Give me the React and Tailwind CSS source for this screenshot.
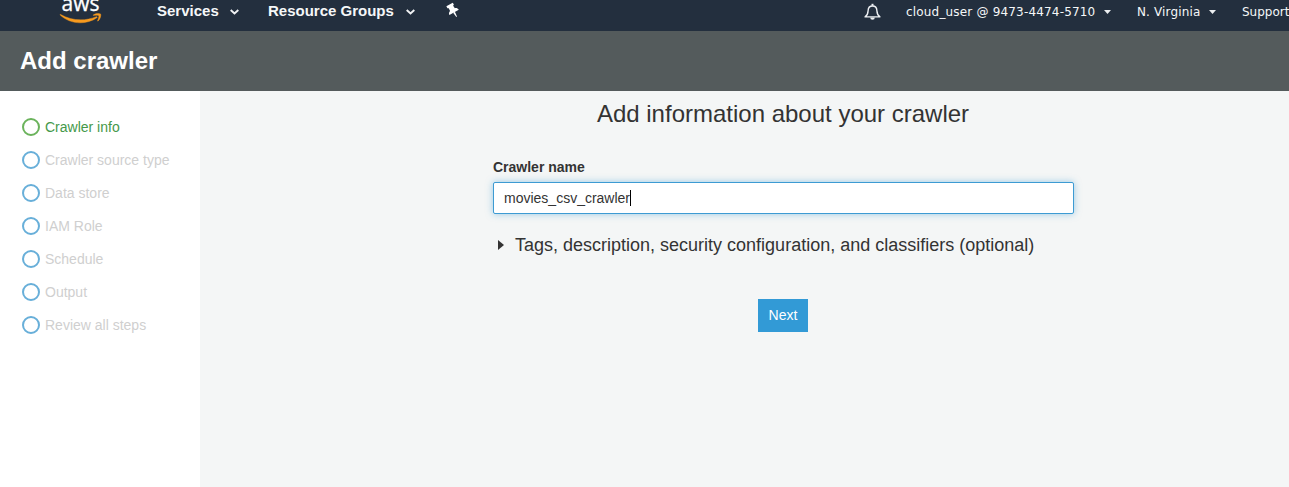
const steps = [
  'Crawler info',
  'Crawler source type',
  'Data store',
  'IAM Role',
  'Schedule',
  'Output',
  'Review all steps',
];

function AwsLogo() {
  return (
    <svg className="block h-[31px] w-[44px]" viewBox="0 0 44 31" aria-label="AWS">
      <text
        x="2.5"
        y="11"
        textLength="38"
        lengthAdjust="spacingAndGlyphs"
        fill="#fff"
        stroke="#fff"
        strokeWidth="0.3"
        fontSize="21"
        fontFamily="'Open Sans', sans-serif"
      >
        aws
      </text>
      <g transform="translate(1 -9.8) scale(1.7)" fill="#f79a1e" stroke="#f79a1e" strokeWidth=".25">
        <path d="M21.698 16.207c-2.626 1.94-6.442 2.969-9.722 2.969-4.598 0-8.74-1.7-11.87-4.526-.247-.223-.024-.527.272-.351 3.384 1.963 7.559 3.153 11.877 3.153 2.914 0 6.114-.607 9.06-1.852.439-.2.814.287.383.607z" />
        <path d="M22.792 14.961c-.336-.43-2.22-.207-3.074-.103-.255.032-.295-.192-.063-.36 1.5-1.053 3.967-.75 4.254-.399.287.36-.08 2.826-1.485 4.007-.215.184-.423.088-.327-.151.32-.79 1.03-2.57.695-2.994z" />
      </g>
    </svg>
  );
}

function Chevron() {
  return (
    <svg className="mt-[2px] h-[6px] w-[9px] shrink-0" viewBox="0 0 9 6">
      <path d="M.7 1l3.8 3.5L8.3 1" fill="none" stroke="#f0f2f4" strokeWidth="1.9" />
    </svg>
  );
}

function Caret() {
  return (
    <svg className="mt-[1px] h-[4px] w-[7px] shrink-0" viewBox="0 0 7 4">
      <path d="M0 0h7L3.5 4z" fill="#eceff1" />
    </svg>
  );
}

function Pin() {
  return (
    <svg className="h-[14px] w-[14px] overflow-visible" viewBox="0 0 14 14">
      <g transform="rotate(-30 7 6.5)" fill="#fff">
        <path d="M3.3-.4h7.4v2.2l-1.2.6.3 3c1.5.5 2.5 1.6 2.6 3.3H1.6c.1-1.7 1.1-2.8 2.6-3.3l.3-3-1.2-.6z" />
        <path d="M6 8.5h2l-.6 5.3h-.8z" />
      </g>
    </svg>
  );
}

function Bell() {
  return (
    <svg className="h-[18px] w-[17px]" viewBox="0 0 17 18" fill="none" stroke="#eef1f4">
      <path
        d="M1.1 13.9c2.4-1.8 2.9-3.5 3-6.2.1-3 1.8-4.7 4.4-4.7s4.3 1.7 4.4 4.7c.1 2.7.6 4.4 3 6.2z"
        strokeWidth="1.4"
        strokeLinejoin="round"
      />
      <path d="M8.5.8v2" strokeWidth="2" />
      <path d="M6.2 14.5a2.3 2.3 0 0 0 4.6 0z" fill="#eef1f4" stroke="none" />
    </svg>
  );
}

function TopBar() {
  return (
    <nav className="flex h-[31px] shrink-0 overflow-hidden bg-[#232f3e] whitespace-nowrap text-[#f5f7f8]">
      <div className="w-[98px] shrink-0 pl-[59px]">
        <AwsLogo />
      </div>
      <div className="ml-[59px] flex h-[22px] w-[111px] shrink-0 items-center gap-[11px] text-[15px] font-bold">
        <span>Services</span>
        <Chevron />
      </div>
      <div className="flex h-[22px] w-[178px] shrink-0 items-center gap-[12px] text-[15px] font-bold">
        <span>Resource Groups</span>
        <Chevron />
      </div>
      <div className="w-[418px] shrink-0 pt-[4px]">
        <Pin />
      </div>
      <div className="w-[42px] shrink-0 pt-[3px]">
        <Bell />
      </div>
      <div className="flex h-[23px] w-[231px] shrink-0 items-center font-['DejaVu_Sans',sans-serif] text-[12px]">
        <span className="w-[198px] tracking-[0.18px]">cloud_user @ 9473-4474-5710</span>
        <Caret />
      </div>
      <div className="flex h-[23px] w-[105px] shrink-0 items-center font-['DejaVu_Sans',sans-serif] text-[12px]">
        <span className="w-[72px] tracking-[0.14px]">N. Virginia</span>
        <Caret />
      </div>
      <div className="flex h-[23px] shrink-0 items-center font-['DejaVu_Sans',sans-serif] text-[12px]">
        Support
      </div>
    </nav>
  );
}

function Sidebar() {
  return (
    <aside className="w-[200px] shrink-0 bg-white pt-5 pl-[22px]">
      <ol>
        {steps.map((step, i) => (
          <li key={step} className="flex h-[33px] items-center gap-[5px] text-[14px]">
            <span
              className={
                i === 0
                  ? 'mb-px size-[18px] rounded-full border-2 border-[#6bb35c]'
                  : 'mb-px size-[18px] rounded-full border-2 border-[#68afd9]'
              }
            />
            <span className={i === 0 ? 'text-[#45994a]' : 'text-[#cfcfcf]'}>{step}</span>
          </li>
        ))}
      </ol>
    </aside>
  );
}

export default function App() {
  return (
    <div className="flex h-screen w-full flex-col overflow-hidden font-['Liberation_Sans',sans-serif] text-[#333]">
      <TopBar />
      <header className="flex h-[60px] shrink-0 items-center bg-[#545b5c] pl-5">
        <h1 className="text-[24px] leading-[30px] font-bold text-white">Add crawler</h1>
      </header>
      <div className="flex min-h-0 flex-1">
        <Sidebar />
        <main className="flex flex-1 flex-col items-center bg-[#f4f6f6] pl-[78px]">
          <div className="flex w-[581px] flex-col">
            <h2 className="mt-2 pr-px text-center text-[24px] leading-[30px]">Add information about your crawler</h2>
            <label className="mt-[28px] text-[14px] leading-[20px] font-bold">Crawler name</label>
            <div className="mt-[5px] flex h-[32px] items-center rounded-[2px] border border-[#3d9bd3] bg-white pl-[10px] text-[14px] shadow-[0_0_7px_rgba(61,155,211,0.5)]">
              <span>movies_csv_crawler</span>
              <span className="h-[16px] w-px bg-black" />
            </div>
            <div className="mt-[19px] flex h-[24px] items-center text-[18px]">
              <svg className="ml-[5px] h-[10px] w-[6px]" viewBox="0 0 6 10">
                <path d="M0 0l6 5-6 5z" fill="#333" />
              </svg>
              <span className="ml-[11px] whitespace-nowrap">
                Tags, description, security configuration, and classifiers (optional)
              </span>
            </div>
            <button className="mt-[42px] mr-px h-[33px] w-[50px] self-center bg-[#329ad6] text-[14px] text-white">
              Next
            </button>
          </div>
        </main>
      </div>
    </div>
  );
}
